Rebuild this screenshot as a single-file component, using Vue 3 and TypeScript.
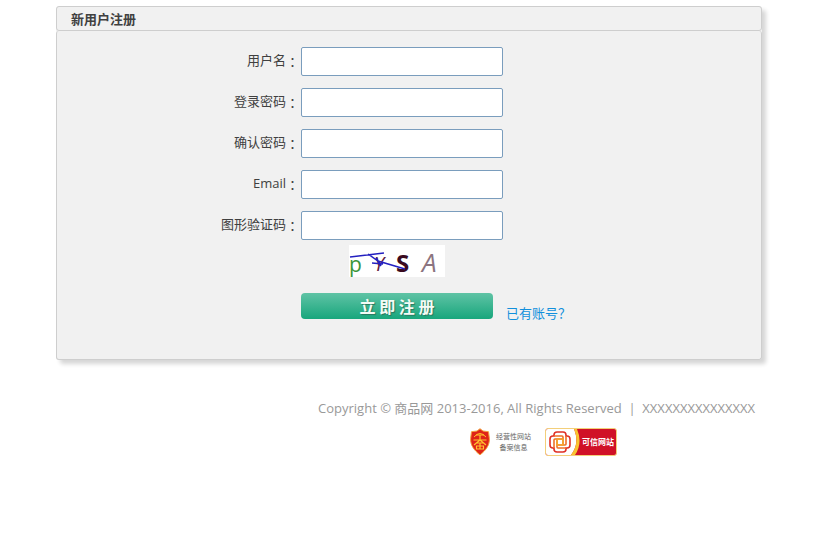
<script setup lang="ts">
import { reactive } from 'vue'

interface Field {
  id: 'username' | 'password' | 'confirm' | 'email' | 'captcha'
  label: string
  type: string
}

const fields: Field[] = [
  { id: 'username', label: '用户名', type: 'text' },
  { id: 'password', label: '登录密码', type: 'password' },
  { id: 'confirm', label: '确认密码', type: 'password' },
  { id: 'email', label: 'Email', type: 'email' },
  { id: 'captcha', label: '图形验证码', type: 'text' },
]

const form = reactive({ username: '', password: '', confirm: '', email: '', captcha: '' })
</script>

<template>
  <div class="page">
    <main class="panel">
      <h1 class="title">新用户注册</h1>
      <form class="form" @submit.prevent>
        <div v-for="field in fields" :key="field.id" class="row">
          <label class="label" :for="field.id">{{ field.label }}<span class="colon">：</span></label>
          <input :id="field.id" v-model="form[field.id]" class="input" :type="field.type" />
        </div>
        <svg class="captcha" width="96" height="32" viewBox="0 0 96 32">
          <rect width="96" height="32" fill="#fff" />
          <g font-family="Open Sans, sans-serif">
            <text x="0" y="27" font-size="21" fill="#3a963a">p</text>
            <text x="25" y="26" font-size="20" font-style="italic" fill="#642040">Y</text>
            <text x="47" y="27" font-size="24" font-weight="700" fill="#3a0a20">S</text>
            <text x="73" y="27" font-size="26" font-style="italic" fill="#8c7480">A</text>
          </g>
          <path d="M1 12 35 8M19 9l10 7 27 8M23 18l11 1M27 13l5 8" fill="none" stroke="#2420c0" stroke-width="1.500" />
        </svg>
        <div class="actions">
          <button class="submit" type="submit">立 即 注 册</button>
          <a class="link" href="#login">已有账号？</a>
        </div>
      </form>
    </main>

    <footer class="footer">
      <p class="copyright">Copyright © 商品网 2013-2016, All Rights Reserved &nbsp;|&nbsp; XXXXXXXXXXXXXXX</p>
      <div class="badges">
        <a class="record" href="#record">
          <svg width="20" height="28" viewBox="0 0 20 28">
            <path d="M10 .7 13 3l5.500.7.9 7c.3 6.500-3.500 11.500-9.400 16.200C4.100 22.200.3 17.200.6 10.700l.9-7L7 3z" fill="#df2418" stroke="#f3a23c" stroke-width="1" />
            <path d="M6 7h8M10 7v5M3.500 12h13M10 12 4 17M10 12l6 5M7 15h6M6.500 18h7v3h-7zM10 15v6" fill="none" stroke="#ffc52e" stroke-width="1.200" />
            <path d="M4 9q6-7 12 0" fill="none" stroke="#ffc52e" stroke-width="1" />
          </svg>
          <span class="record-text">经营性网站<br />备案信息</span>
        </a>
        <a class="trust" href="#trust">
          <svg class="trust-art" width="34" height="26" viewBox="0 0 34 26">
            <path d="M0 0h28q6 14-3 26H0z" fill="#fff" />
            <path d="M28 0q6 14-3 26h4q8-12 2-26z" fill="#f9c431" />
            <g fill="none" stroke-width="1.600">
              <path d="M8 7V6q0-3 3-3h6q3 0 3 3v1h1q3 0 3 3v6q0 3-3 3h-1v1q0 3-3 3h-6q-3 0-3-3v-1H7q-3 0-3-3v-6q0-3 3-3z" stroke="#df3026" />
              <path d="M8 7h8q1 0 1 1v8M20 7v8q0 1-1 1h-8M20 19h-8q-1 0-1-1v-8M8 19v-8q0-1 1-1h8" stroke="#ee7029" />
              <path d="M11 10h6v6h-6z" stroke="#f5a52a" />
            </g>
          </svg>
          <span class="trust-text">可信网站</span>
        </a>
      </div>
    </footer>
  </div>
</template>

<style>
body {
  background: #fff;
}
</style>

<style scoped>
.page {
  max-width: 706px;
  margin: 0 auto;
  padding: 6px 57px 0 56px;
  font: 13px/20px "Open Sans", "Noto Sans CJK SC", sans-serif;
  color: #404040;
}

.panel {
  border-radius: 3px;
  background: #f1f1f1;
  box-shadow: 4px 4px 4px #d6d6d6;
}

.title {
  box-sizing: border-box;
  height: 25px;
  margin: 0;
  padding-left: 14px;
  border: 1px solid #cecece;
  border-radius: 3px;
  font-size: 13px;
  line-height: 24px;
}

.form {
  display: flex;
  flex-direction: column;
  padding: 16px 0 40px;
  border: 1px solid #cecece;
  border-top: 0;
  border-radius: 3px;
}

.row {
  display: grid;
  grid-template-columns: 242px 202px;
  column-gap: 2px;
  height: 29px;
  margin-bottom: 12px;
}

.row:nth-of-type(5) {
  margin-bottom: 5px;
}

.label {
  line-height: 26px;
  text-align: right;
}

.colon {
  font-family: "Noto Sans CJK TC", sans-serif;
  vertical-align: -2px;
}

.input {
  box-sizing: border-box;
  height: 29px;
  padding: 0 6px;
  border: 1px solid #7a9dbd;
  border-radius: 2px;
  background: #fff;
  font: inherit;
  color: inherit;
}

.captcha {
  display: block;
  margin-left: 292px;
  overflow: visible;
}

.actions {
  display: flex;
  gap: 13px;
  margin: 16px 0 0 244px;
}

.submit {
  width: 192px;
  height: 26px;
  padding: 0;
  border: 0;
  border-radius: 4px;
  background: linear-gradient(#5fc3a5, #18a67c);
  color: #f4fbf6;
  font: 700 16px/26px "Noto Sans CJK SC", sans-serif;
  text-shadow: 1px 1px 1px #28785f;
  cursor: pointer;
}

.link {
  height: 20px;
  padding-top: 10px;
  margin-bottom: -4px;
  color: #1290dc;
  text-decoration: none;
}

.footer {
  display: flex;
  flex-direction: column;
  align-items: center;
  width: fit-content;
  margin: 38px 7px 0 auto;
  color: #999;
}

.copyright {
  margin: 0;
}

.badges {
  display: flex;
  gap: 14px;
  margin-top: 10px;
  padding-left: 14px;
}

.record,
.trust {
  display: flex;
  align-items: center;
  text-decoration: none;
}

.record {
  gap: 6px;
}

.record-text {
  color: #666;
  font-size: 7px;
  line-height: 11px;
  text-align: center;
}

.trust {
  box-sizing: border-box;
  width: 72px;
  height: 28px;
  overflow: hidden;
  border: 1px solid #f3cf7a;
  border-radius: 3px;
  background: #d01127;
}

.trust-art {
  flex: none;
}

.trust-text {
  margin-left: 2px;
  color: #fff;
  font-size: 8px;
  font-weight: 700;
  white-space: nowrap;
}
</style>
